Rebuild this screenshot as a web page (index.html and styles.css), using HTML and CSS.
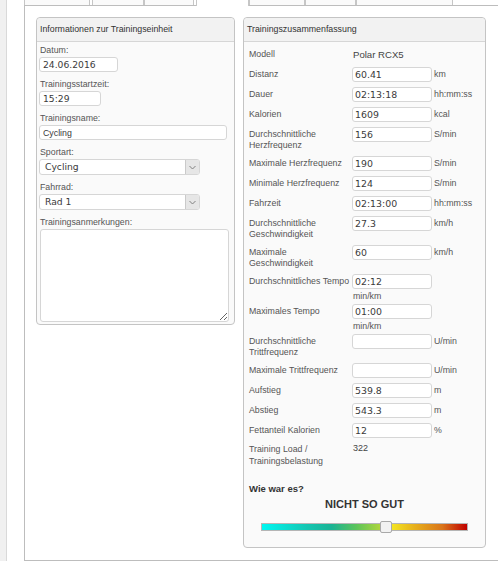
FILE: index.html
```html
<!DOCTYPE html>
<html lang="de">
<head>
    <meta charset="UTF-8">
    <link rel="stylesheet" href="styles.css">
</head>
<body>
    <div class="sidebar"></div>

    <div class="main">
        <div class="tabs">
            <div class="tab"></div>
            <div class="tab"></div>
            <div class="tab"></div>
            <div class="tab active"></div>
            <div class="tab"></div>
            <div class="tab"></div>
            <div class="tab"></div>
        </div>

        <div class="content">
            <div class="panel panel-info">
                <div class="panel-heading">Informationen zur Trainingseinheit</div>
                <div class="panel-body">
                    <div class="field">
                        <label class="field-label">Datum:</label>
                        <input class="text-input w-date" type="text" value="24.06.2016">
                    </div>
                    <div class="field">
                        <label class="field-label">Trainingsstartzeit:</label>
                        <input class="text-input w-time" type="text" value="15:29">
                    </div>
                    <div class="field">
                        <label class="field-label">Trainingsname:</label>
                        <input class="text-input w-full name" type="text" value="Cycling">
                    </div>
                    <div class="field">
                        <label class="field-label">Sportart:</label>
                        <div class="select">
                            <span class="select-value">Cycling</span>
                            <span class="select-arrow">
                                <svg width="7" height="5" viewBox="0 0 7 5"><path d="M0.5 1 L3.5 4 L6.5 1" fill="none" stroke="#808080" stroke-width="1"/></svg>
                            </span>
                        </div>
                    </div>
                    <div class="field">
                        <label class="field-label">Fahrrad:</label>
                        <div class="select">
                            <span class="select-value">Rad 1</span>
                            <span class="select-arrow">
                                <svg width="7" height="5" viewBox="0 0 7 5"><path d="M0.5 1 L3.5 4 L6.5 1" fill="none" stroke="#808080" stroke-width="1"/></svg>
                            </span>
                        </div>
                    </div>
                    <div class="field">
                        <label class="field-label">Trainingsanmerkungen:</label>
                        <textarea class="notes"></textarea>
                    </div>
                </div>
            </div>

            <div class="panel panel-summary">
                <div class="panel-heading">Trainingszusammenfassung</div>
                <div class="panel-body">
                    <div class="summary">
                        <div class="lbl">Modell</div>
                        <div class="val">Polar RCX5</div>
                        <div></div>

                        <div class="lbl">Distanz</div>
                        <input class="num" type="text" value="60.41">
                        <div class="unit">km</div>

                        <div class="lbl">Dauer</div>
                        <input class="num" type="text" value="02:13:18">
                        <div class="unit">hh:mm:ss</div>

                        <div class="lbl">Kalorien</div>
                        <input class="num" type="text" value="1609">
                        <div class="unit">kcal</div>

                        <div class="lbl">Durchschnittliche Herzfrequenz</div>
                        <input class="num" type="text" value="156">
                        <div class="unit">S/min</div>

                        <div class="lbl">Maximale Herzfrequenz</div>
                        <input class="num" type="text" value="190">
                        <div class="unit">S/min</div>

                        <div class="lbl">Minimale Herzfrequenz</div>
                        <input class="num" type="text" value="124">
                        <div class="unit">S/min</div>

                        <div class="lbl">Fahrzeit</div>
                        <input class="num" type="text" value="02:13:00">
                        <div class="unit">hh:mm:ss</div>

                        <div class="lbl">Durchschnittliche Geschwindigkeit</div>
                        <input class="num" type="text" value="27.3">
                        <div class="unit">km/h</div>

                        <div class="lbl">Maximale Geschwindigkeit</div>
                        <input class="num" type="text" value="60">
                        <div class="unit">km/h</div>

                        <div class="lbl nowrap">Durchschnittliches Tempo</div>
                        <div class="num-wrap">
                            <input class="num" type="text" value="02:12">
                            <div class="unit-below">min/km</div>
                        </div>
                        <div></div>

                        <div class="lbl">Maximales Tempo</div>
                        <div class="num-wrap">
                            <input class="num" type="text" value="01:00">
                            <div class="unit-below">min/km</div>
                        </div>
                        <div></div>

                        <div class="lbl">Durchschnittliche Trittfrequenz</div>
                        <input class="num" type="text" value="">
                        <div class="unit">U/min</div>

                        <div class="lbl">Maximale Trittfrequenz</div>
                        <input class="num" type="text" value="">
                        <div class="unit">U/min</div>

                        <div class="lbl">Aufstieg</div>
                        <input class="num" type="text" value="539.8">
                        <div class="unit">m</div>

                        <div class="lbl">Abstieg</div>
                        <input class="num" type="text" value="543.3">
                        <div class="unit">m</div>

                        <div class="lbl">Fettanteil Kalorien</div>
                        <input class="num" type="text" value="12">
                        <div class="unit">%</div>

                        <div class="lbl plain">Training Load / Trainingsbelastung</div>
                        <div class="val plain">322</div>
                        <div></div>
                    </div>

                    <div class="rating">
                        <div class="rating-title">Wie war es?</div>
                        <div class="rating-value">NICHT SO GUT</div>
                        <input class="rating-slider" type="range" min="0" max="100" value="61">
                    </div>
                </div>
            </div>
        </div>
    </div>
</body>
</html>
```

FILE: styles.css
```css
* {
    margin: 0;
    padding: 0;
    box-sizing: border-box;
}

body {
    display: flex;
    min-height: 561px;
    background: white;
    font-family: "Liberation Sans", Arial, sans-serif;
    overflow: hidden;
}

.sidebar {
    width: 7px;
    background: #f0f0f0;
    border-right: 1px solid #d9d9d9;
}

.main {
    flex: 1;
    padding-left: 17px;
    display: flex;
    flex-direction: column;
}

/* tab strip, only its lower edge is in view */
.tabs {
    display: flex;
    height: 6px;
    border-bottom: 1px solid #bdbdbd;
}

.tab {
    height: 5px;
    background: #fafafa;
    border: 1px solid #c6c6c6;
    border-top: 0;
    border-bottom: 0;
}

.tab:nth-child(1) { width: 66px; }
.tab:nth-child(2) { width: 52px; margin-left: 2px; }
.tab:nth-child(3) { width: 50px; }
.tab:nth-child(4) { width: 53px; margin-left: 2px; }
.tab:nth-child(5) { width: 56px; }
.tab:nth-child(6) { width: 51px; }
.tab:nth-child(7) { width: 97px; }

.tab.active {
    height: 6px;
    background: white;
    margin-bottom: -1px;
    position: relative;
}

.content {
    flex: 1;
    display: flex;
    align-items: flex-start;
    gap: 8px;
    padding: 11px 0 11px 11px;
    border-left: 1px solid #bdbdbd;
    border-bottom: 1px solid #bdbdbd;
}

.panel {
    background: #fafafa;
    border: 1px solid #c4c4c4;
    border-radius: 4px;
}

.panel-info {
    width: 199px;
}

.panel-summary {
    width: 243px;
}

.panel-heading {
    height: 24px;
    line-height: 23px;
    padding-left: 3px;
    font-size: 8.8px;
    color: #333;
    background: #f2f2f2;
    border-bottom: 1px solid #d6d6d6;
    border-radius: 4px 4px 0 0;
}

.panel-info .panel-body {
    padding: 2px 5px 2px 2px;
}

.field + .field {
    margin-top: 6px;
}

.field-label {
    display: block;
    padding-left: 1px;
    margin-bottom: 1px;
    font-size: 8.8px;
    line-height: 12px;
    color: #555;
}

.text-input {
    display: block;
    height: 15px;
    padding: 0 3px;
    border: 1px solid #d6d6d6;
    border-radius: 3px;
    background: white;
    font-family: "DejaVu Sans", Verdana, sans-serif;
    font-size: 9.2px;
    color: #3a3a3a;
    outline: none;
}

.text-input.name {
    font-family: "Liberation Sans", Arial, sans-serif;
    font-size: 8.8px;
}

.w-date { width: 79px; }
.w-time { width: 62px; }
.w-full { width: 188px; }

.select {
    display: flex;
    width: 161px;
    height: 16px;
    border: 1px solid #d6d6d6;
    border-radius: 3px;
    background: white;
}

.select-value {
    flex: 1;
    padding-left: 5px;
    line-height: 14px;
    font-family: "DejaVu Sans", Verdana, sans-serif;
    font-size: 9.2px;
    color: #3a3a3a;
}

.select-arrow {
    width: 14px;
    display: flex;
    align-items: center;
    justify-content: center;
    background: #e6e6e6;
    border-left: 1px solid #cacaca;
    border-radius: 0 2px 2px 0;
}

.notes {
    display: block;
    width: 189px;
    height: 93px;
    margin-left: 1px;
    border: 1px solid #d6d6d6;
    border-radius: 3px;
    background: white;
    resize: both;
    outline: none;
}

.panel-summary .panel-body {
    padding: 5px 5px 14px 5px;
}

.summary {
    display: grid;
    grid-template-columns: 101px 80px auto;
    grid-auto-rows: minmax(15px, auto);
    column-gap: 2px;
    row-gap: 5px;
    align-items: start;
}

.lbl {
    padding-top: 2px;
    font-size: 8.8px;
    line-height: 11px;
    color: #555;
}

.lbl.nowrap {
    white-space: nowrap;
}

.lbl.plain {
    padding-top: 0;
    line-height: 12px;
}

.val {
    padding-top: 2px;
    padding-left: 1px;
    font-size: 9.6px;
    line-height: 11px;
    color: #444;
}

.val.plain {
    padding-top: 0;
    font-size: 9px;
}

.num {
    display: block;
    width: 80px;
    height: 15px;
    padding: 0 2px;
    border: 1px solid #d6d6d6;
    border-radius: 3px;
    background: white;
    font-family: "DejaVu Sans", Verdana, sans-serif;
    font-size: 9.4px;
    color: #3a3a3a;
    outline: none;
}

.unit {
    padding-top: 2px;
    font-size: 8.8px;
    line-height: 11px;
    color: #555;
}

.unit-below {
    margin: 2px 0 -3px 1px;
    font-size: 8.8px;
    line-height: 11px;
    color: #555;
}

.rating {
    margin-top: 16px;
}

.rating-title {
    font-size: 9.5px;
    font-weight: bold;
    line-height: 12px;
    color: #333;
}

.rating-value {
    margin-top: 2px;
    text-align: center;
    font-size: 11px;
    font-weight: bold;
    line-height: 14px;
    color: #333;
}

.rating-slider {
    -webkit-appearance: none;
    appearance: none;
    display: block;
    width: 207px;
    height: 12px;
    margin: 10px auto 0;
    background: transparent;
    outline: none;
}

.rating-slider::-webkit-slider-runnable-track {
    height: 8px;
    border: 1px solid #b5b5b5;
    background: linear-gradient(to right, #00f7f2 0%, #14c6b2 22%, #1ab394 34%, #5cc45a 46%, #b0d63c 58%, #f4e722 63%, #e7b21c 74%, #d9741a 88%, #c00000 100%);
}

.rating-slider::-webkit-slider-thumb {
    -webkit-appearance: none;
    width: 12px;
    height: 12px;
    margin-top: -3px;
    background: #f2f2f2;
    border: 1px solid #a9a9a9;
    border-radius: 2px;
}
```
